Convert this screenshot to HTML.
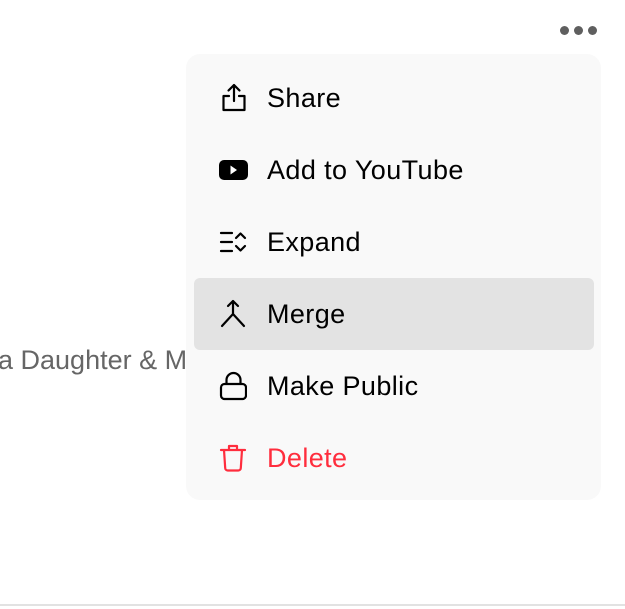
<!DOCTYPE html>
<html><head><meta charset="utf-8"><style>
html,body{margin:0;padding:0;width:625px;height:609px;background:#fff;overflow:hidden;font-family:"Liberation Sans",sans-serif;position:relative}
.bg{position:absolute;left:-2px;top:345px;font-size:27px;color:#666;white-space:nowrap}
.dots{position:absolute;top:26px;left:560px}
.dots i{position:absolute;width:9px;height:9px;border-radius:50%;background:#5f5f5f;top:0}
.menu{position:absolute;left:186px;top:54px;width:415px;height:446px;background:#f9f9f9;border-radius:14px}
.item{position:absolute;left:8px;width:400px;height:72px;border-radius:6px}
.item.h{background:#e3e3e3}
.item span{position:absolute;left:73px;top:21px;font-size:27px;letter-spacing:0.4px;color:#000;line-height:30px}
.item svg{position:absolute;left:24px;top:22px}
.line{position:absolute;left:0;right:0;top:604px;height:2px;background:#e2e2e2}
</style></head><body>
<div class="bg">a Daughter &amp; Mom</div>
<div class="dots"><i style="left:0"></i><i style="left:14px"></i><i style="left:28px"></i></div>
<div class="menu">
 <div class="item" style="top:8px"><svg style="left:26px;top:21px" width="28" height="30" viewBox="0 0 28 30" fill="none" stroke="#000" stroke-width="2.2" stroke-linecap="round" stroke-linejoin="round"><path d="M14 2v16M8.5 7.5L14 2l5.5 5.5M9 13H3.5v14h21V13H19"/></svg><span>Share</span></div>
 <div class="item" style="top:80px"><svg style="left:24px;top:25px" width="30" height="22" viewBox="0 0 30 22"><rect x="1" y="1" width="29" height="20" rx="5" fill="#000"/><path d="M12.5 6.5l6.5 4.5-6.5 4.5z" fill="#fff"/></svg><span>Add to YouTube</span></div>
 <div class="item" style="top:152px"><svg style="left:25px;top:22px" width="30" height="28" viewBox="0 0 30 28" fill="none" stroke="#000" stroke-width="2.2" stroke-linecap="round" stroke-linejoin="round"><path d="M2 5h11M2 14h11M2 23h11M17 10l4.5-4.5L26 10M17 18l4.5 4.5L26 18"/></svg><span>Expand</span></div>
 <div class="item h" style="top:224px"><svg style="left:25px;top:21px" width="28" height="30" viewBox="0 0 28 30" fill="none" stroke="#000" stroke-width="2.2" stroke-linecap="round" stroke-linejoin="round"><path d="M9 7l5-5 5 5M14 2v13L3 27M14 15l11 12"/></svg><span>Merge</span></div>
 <div class="item" style="top:296px"><svg style="left:25px;top:21px" width="28" height="30" viewBox="0 0 28 30" fill="none" stroke="#000" stroke-width="2.2" stroke-linejoin="round"><rect x="2" y="13" width="25" height="15" rx="3.5"/><path d="M7.5 13V9a7 7 0 0 1 14 0v4"/></svg><span>Make Public</span></div>
 <div class="item" style="top:368px"><svg style="left:25px;top:21px" width="28" height="30" viewBox="0 0 28 30" fill="none" stroke="#ff2d3d" stroke-width="2.2" stroke-linecap="round" stroke-linejoin="round"><path d="M2 7h24M10 7V3h8v4M5 7l1.2 18a2.5 2.5 0 0 0 2.5 2.5h10.6a2.5 2.5 0 0 0 2.5-2.5L23 7"/></svg><span style="color:#ff2d3d">Delete</span></div>
</div>
<div class="line"></div>
</body></html>
